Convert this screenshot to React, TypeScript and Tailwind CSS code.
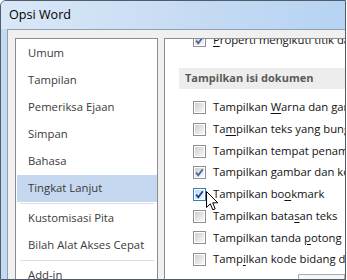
import React from "react";

function Box({ checked = false, hot = false }: { checked?: boolean; hot?: boolean }) {
  return (
    <span
      className={
        hot
          ? "relative shrink-0 w-[13px] h-[13px] border border-[#3c7fb1] bg-white p-[1px]"
          : "relative shrink-0 w-[13px] h-[13px] border border-[#8e8f8f] bg-white p-[1px]"
      }
    >
      <span
        className={
          hot
            ? "block w-full h-full bg-gradient-to-br from-[#bcd9f5] to-[#eef6fe]"
            : "block w-full h-full bg-gradient-to-br from-[#cfcfcf] to-[#f8f8f8]"
        }
      />
      {checked && (
        <svg className="absolute left-[1px] top-[1px]" width="9" height="9" viewBox="0 0 9 9">
          <polyline
            points="1.2,4.6 3.3,7.2 7.8,1.2"
            fill="none"
            stroke={hot ? "#1f3f8a" : "#4a63a3"}
            strokeWidth="1.8"
          />
        </svg>
      )}
    </span>
  );
}

function Row({
  children,
  checked,
  hot,
}: {
  children: React.ReactNode;
  checked?: boolean;
  hot?: boolean;
}) {
  return (
    <div className="h-[21.7px] flex items-center pl-[28px] gap-[7px] whitespace-nowrap text-[#111]">
      <Box checked={checked} hot={hot} />
      <span>{children}</span>
    </div>
  );
}

const U = ({ children }: { children: React.ReactNode }) => (
  <span className="underline underline-offset-[2px]">{children}</span>
);

export default function App() {
  const nav1 = ["Umum", "Tampilan", "Pemeriksa Ejaan", "Simpan", "Bahasa"];
  return (
    <div
      className="w-[347px] h-[280px] bg-white overflow-hidden relative text-[11.3px]"
      style={{ fontFamily: '"Open Sans", "Noto Sans", sans-serif' }}
    >
      <div className="w-[346px] h-[280px] border border-[#505c6a] rounded-tl-[6px] bg-[#c3daf2] flex flex-col overflow-hidden">
        <div className="h-[28px] shrink-0 bg-gradient-to-r from-[#d9e8f8] via-[#c8dcf3] to-[#b6d3f3] flex items-center pl-[8px] text-[12.6px] text-black">
          Opsi Word
        </div>
        <div className="flex-1 min-h-0 ml-[6px] border-l border-t border-[#8fa0b3] bg-[#f0f0f0] flex pl-[7px] pt-[8px] gap-[6px] overflow-hidden">
          {/* left nav */}
          <div className="w-[143px] shrink-0 border-l border-t border-r border-[#8d8d8d] bg-white pt-[1px] text-[#3a3a3a]">
            {nav1.map((t) => (
              <div key={t} className="h-[27px] flex items-center pl-[12px]">
                {t}
              </div>
            ))}
            <div className="h-[27px] flex items-center pl-[11px] ml-[1px] bg-[#c5d8f0]">Tingkat Lanjut</div>
            <div className="h-[3px] flex items-center pl-[4px] pr-[3px]">
              <div className="h-[1px] w-full bg-[#dedede]" />
            </div>
            <div className="h-[27px] flex items-center pl-[12px]">Kustomisasi Pita</div>
            <div className="h-[27px] flex items-center pl-[12px]">Bilah Alat Akses Cepat</div>
            <div className="h-[3px] flex items-center pl-[4px] pr-[3px]">
              <div className="h-[1px] w-full bg-[#dedede]" />
            </div>
            <div className="h-[27px] flex items-center pl-[12px]">Add-in</div>
          </div>
          {/* right content */}
          <div className="flex-1 min-w-0 border-l border-t border-[#8d8d8d] bg-white overflow-hidden">
            <div className="mt-[-10px] flex flex-col">
              <div className="h-[22px] flex items-center pl-[28px] gap-[7px] whitespace-nowrap text-[#111]">
                <Box checked />
                <span>
                  <U>P</U>roperti mengikuti titik dari jangkar
                </span>
              </div>
              <div className="mt-[17px] ml-[14px] h-[21px] bg-[#ededed] flex items-center pl-[6px] font-bold text-[11px] text-[#5a5a5a] whitespace-nowrap">
                Tampilkan isi dokumen
              </div>
              <div className="mt-[8px]" />
              <Row>
                Tampilkan <U>W</U>arna dan gambar latar
              </Row>
              <Row>
                Ta<U>m</U>pilkan teks yang bungkus di jendela
              </Row>
              <Row>Tampilkan tempat penampung gambar</Row>
              <Row checked>Tampilkan gambar dan kotak teks</Row>
              <Row checked hot>
                Tampilkan bo<U>o</U>kmark
              </Row>
              <Row>
                Tampilkan bata<U>s</U>an teks
              </Row>
              <Row>
                Tampilkan tanda <U>p</U>otong
              </Row>
              <Row>
                Tamp<U>i</U>lkan kode bidang daripada nilainya
              </Row>
              <div className="mt-[3px] ml-[133px] h-[22px] border border-[#acacac] bg-[#f6f6f6]" />
            </div>
          </div>
        </div>
      </div>
      {/* mouse cursor */}
      <svg className="absolute left-[206px] top-[191px]" width="13" height="21" viewBox="0 0 13 21">
        <path
          d="M0.5 0.5 L0.5 16.5 L4.3 12.8 L6.8 18.8 L9.2 17.8 L6.7 11.8 L11.8 11.8 Z"
          fill="white"
          stroke="black"
          strokeWidth="1"
          strokeLinejoin="miter"
        />
      </svg>
    </div>
  );
}
